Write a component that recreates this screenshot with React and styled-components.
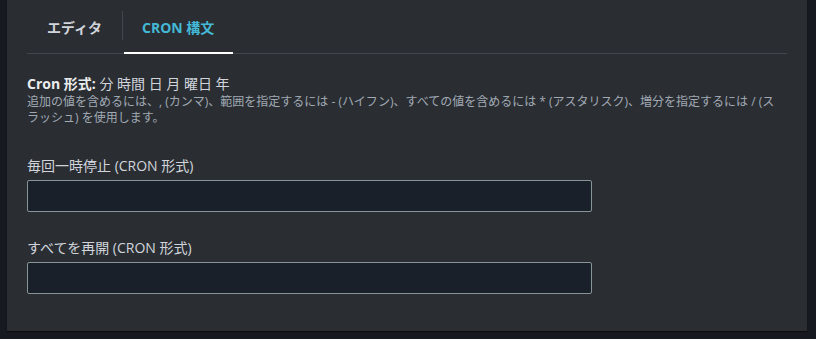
import React from "react";
import styled, { createGlobalStyle } from "styled-components";

const Global = createGlobalStyle`
  html, body { margin: 0; padding: 0; background: #16191f; }
  body { font-family: "Open Sans", "Noto Sans CJK JP", sans-serif; }
  * { box-sizing: border-box; }
`;

const Page = styled.div`
  width: 816px;
  height: 339px;
  background: #16191f;
  padding: 0 9px 0 7px;
`;

const Panel = styled.div`
  width: 800px;
  height: 331px;
  background: #2a2e33;
  box-shadow: 0 1px 1px rgba(0, 0, 0, 0.5);
  padding: 0 20px;
`;

const TabBar = styled.div`
  display: flex;
  align-items: stretch;
  height: 54px;
  border-bottom: 1px solid #414750;
`;

const Tab = styled.div`
  position: relative;
  display: flex;
  align-items: center;
  padding: 0 ${(p) => p.$pad}px;
  font-size: 14px;
  font-weight: 700;
  color: ${(p) => (p.$active ? "#44b9d6" : "#d1d5db")};
  ${(p) =>
    p.$active &&
    `&::after { content: ""; position: absolute; left: 1px; right: 0; bottom: -1px; height: 2px; background: #ffffff; }`}
`;

const Divider = styled.div`
  width: 1px;
  background: #414750;
  margin: 11px 0 13px;
`;

const Body = styled.div`
  padding-top: 20px;
  display: flex;
  flex-direction: column;
`;

const Heading = styled.div`
  font-size: 14px;
  line-height: 20px;
  color: #d1d5db;
  b { font-weight: 700; color: #eaeded; }
`;

const Desc = styled.div`
  font-size: 12px;
  line-height: 16px;
  color: #a1a9b3;
  width: 752px;
`;

const Field = styled.div`
  display: flex;
  flex-direction: column;
  margin-top: ${(p) => p.$mt}px;
`;

const Label = styled.div`
  font-size: 14px;
  line-height: 20px;
  color: #d1d5db;
  margin-bottom: 4px;
`;

const Input = styled.input`
  width: 565px;
  height: 32px;
  background: #1a2029;
  border: 1px solid #879596;
  border-radius: 2px;
  color: #d1d5db;
  font: inherit;
  padding: 0 10px;
  outline: none;
`;

export default function App() {
  return (
    <>
      <Global />
      <Page>
        <Panel>
          <TabBar>
            <Tab $pad={20}>エディタ</Tab>
            <Divider />
            <Tab $active $pad={19}>CRON 構文</Tab>
          </TabBar>
          <Body>
            <Heading>
              <b>Cron 形式:</b> 分 時間 日 月 曜日 年
            </Heading>
            <Desc>
              追加の値を含めるには、, (カンマ)、範囲を指定するには - (ハイフン)、すべての値を含めるには * (アスタリスク)、増分を指定するには / (スラッシュ) を使用します。
            </Desc>
            <Field $mt={30}>
              <Label>毎回一時停止 (CRON 形式)</Label>
              <Input />
            </Field>
            <Field $mt={26}>
              <Label>すべてを再開 (CRON 形式)</Label>
              <Input />
            </Field>
          </Body>
        </Panel>
      </Page>
    </>
  );
}
